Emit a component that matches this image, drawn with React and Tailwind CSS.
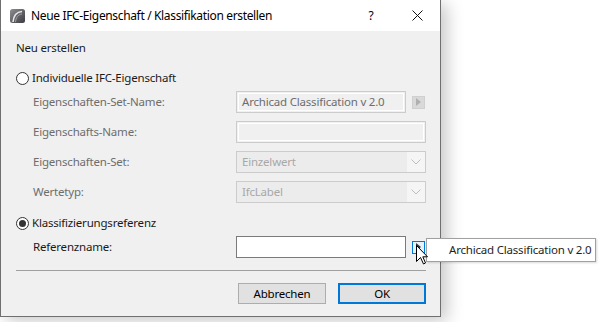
import React from "react";

function Radio({ checked }) {
  return (
    <div className="w-[13px] h-[13px] rounded-full border border-[#333333] bg-white flex items-center justify-center shrink-0">
      {checked && <div className="w-[7px] h-[7px] rounded-full bg-[#333333]" />}
    </div>
  );
}

function Chevron() {
  return (
    <svg width="10" height="6" viewBox="0 0 10 6" className="block">
      <path d="M0.5 0.5 L5 5 L9.5 0.5" fill="none" stroke="#bdbdbd" strokeWidth="1" />
    </svg>
  );
}

function Tri({ color }) {
  return (
    <svg width="5" height="8" viewBox="0 0 5 8" className="block">
      <path d="M0 0 L5 4 L0 8 Z" fill={color} />
    </svg>
  );
}

function Label({ children, dark }) {
  return (
    <div className={`w-[220px] pl-[17px] shrink-0 whitespace-nowrap ${dark ? "text-[#1a1a1a]" : "text-[#6d6d6d]"}`}>
      {children}
    </div>
  );
}

function Dropdown({ value }) {
  return (
    <div className="w-[190px] h-[22px] border border-[#cccccc] flex bg-[#f5f5f5]">
      <div className="w-[170px] h-full bg-[#ececec] flex items-center pl-[5px] text-[#a8a8a8]">
        {value}
      </div>
      <div className="flex-1 flex items-center justify-center">
        <Chevron />
      </div>
    </div>
  );
}

export default function App() {
  return (
    <div className="w-[607px] h-[322px] bg-white overflow-hidden relative font-['Noto_Sans',sans-serif] text-[11.5px] tracking-[-0.2px] leading-none">
      <div className="w-[441px] h-[317px] flex flex-col bg-[#f0f0f0] border-x border-b border-[#6f6f6f] shadow-[6px_4px_16px_rgba(0,0,0,0.22)]">
        {/* Title bar */}
        <div className="h-[31px] bg-white flex items-center shrink-0">
          <svg width="15" height="14" viewBox="0 0 15 14" className="ml-[9px] block">
            <defs>
              <linearGradient id="ac" x1="0" y1="0" x2="1" y2="1">
                <stop offset="0" stopColor="#8d8d92" />
                <stop offset="1" stopColor="#3c3c42" />
              </linearGradient>
            </defs>
            <rect x="0" y="0" width="15" height="14" rx="2.5" fill="url(#ac)" />
            <path d="M3 13 C3.5 7 6 3 12 2.5" fill="none" stroke="#e6e6e6" strokeWidth="1.6" />
            <path d="M5.5 13 C6 8.5 8 5.5 12 5" fill="none" stroke="#b0b0b4" strokeWidth="0.8" />
          </svg>
          <div className="ml-[6px] text-black text-[12px] tracking-[-0.35px] whitespace-nowrap">Neue IFC-Eigenschaft / Klassifikation erstellen</div>
          <div className="flex-1" />
          <div className="w-[46px] h-full flex items-center justify-center text-black text-[12px]">?</div>
          <div className="w-[46px] h-full flex items-center justify-center">
            <svg width="11" height="11" viewBox="0 0 11 11" className="block">
              <path d="M0.5 0.5 L10.5 10.5 M10.5 0.5 L0.5 10.5" stroke="#111" strokeWidth="1" />
            </svg>
          </div>
        </div>

        {/* Body */}
        <div className="flex flex-col pl-[15px] pr-[14px]">
          <div className="mt-[9px] h-[16px] flex items-center text-[#1a1a1a]">Neu erstellen</div>

          <div className="mt-[14px] h-[16px] flex items-center text-[#1a1a1a]">
            <Radio />
            <span className="ml-[3px]">Individuelle IFC-Eigenschaft</span>
          </div>

          <div className="mt-[5px] flex flex-col gap-2">
            <div className="h-[22px] flex items-center">
              <Label>Eigenschaften-Set-Name:</Label>
              <div className="w-[170px] h-[22px] border border-[#cccccc] p-px">
                <div className="w-full h-full border border-white flex items-center pl-[3px] text-[#6d6d6d] whitespace-nowrap">
                  Archicad Classification v 2.0
                </div>
              </div>
              <div className="ml-[6px] w-[13px] h-[13px] bg-[#d9d9d9] border border-[#cfcfcf] flex items-center justify-center">
                <Tri color="#b0b0b0" />
              </div>
            </div>
            <div className="h-[22px] flex items-center">
              <Label>Eigenschafts-Name:</Label>
              <div className="w-[190px] h-[22px] border border-[#cccccc] p-px">
                <div className="w-full h-full border border-white" />
              </div>
            </div>
            <div className="h-[22px] flex items-center">
              <Label>Eigenschaften-Set:</Label>
              <Dropdown value="Einzelwert" />
            </div>
            <div className="h-[22px] flex items-center">
              <Label>Wertetyp:</Label>
              <Dropdown value="IfcLabel" />
            </div>
          </div>

          <div className="mt-[12px] h-[16px] flex items-center text-[#1a1a1a]">
            <Radio checked />
            <span className="ml-[3px]">Klassifizierungsreferenz</span>
          </div>

          <div className="mt-[5px] h-[22px] flex items-center">
            <Label dark>Referenzname:</Label>
            <div className="w-[170px] h-[22px] border border-[#7a7a7a] bg-white" />
            <div className="ml-[6px] w-[13px] h-[13px] bg-[#e5f1fb] border border-[#0078d7] flex items-center justify-center">
              <Tri color="#333333" />
            </div>
          </div>

          <div className="mt-[12px] h-px bg-[#a0a0a0]" />

          <div className="mt-[12px] flex justify-end gap-3">
            <div className="w-[88px] h-[21px] bg-[#e1e1e1] border border-[#adadad] flex items-center justify-center text-black">
              Abbrechen
            </div>
            <div className="w-[88px] h-[21px] bg-[#e1e1e1] border-2 border-[#0078d7] flex items-center justify-center text-black">
              OK
            </div>
          </div>
        </div>
      </div>

      {/* Tooltip */}
      <div className="absolute left-[426px] top-[238px] w-[170px] h-[24px] bg-white border border-[#a0a0a0] flex items-center pl-[22px] text-[#1e1e1e] whitespace-nowrap shadow-[1px_1px_2px_rgba(0,0,0,0.15)]">
        Archicad Classification v 2.0
      </div>

      {/* Cursor */}
      <svg width="13" height="21" viewBox="0 0 13 21" className="absolute left-[416px] top-[245px] block">
        <path
          d="M0.5 0.5 L0.5 16.5 L4.5 12.5 L7.5 19 L9.5 18 L6.8 11.8 L11.5 11.8 Z"
          fill="white"
          stroke="black"
          strokeWidth="1"
          strokeLinejoin="miter"
        />
      </svg>
    </div>
  );
}
